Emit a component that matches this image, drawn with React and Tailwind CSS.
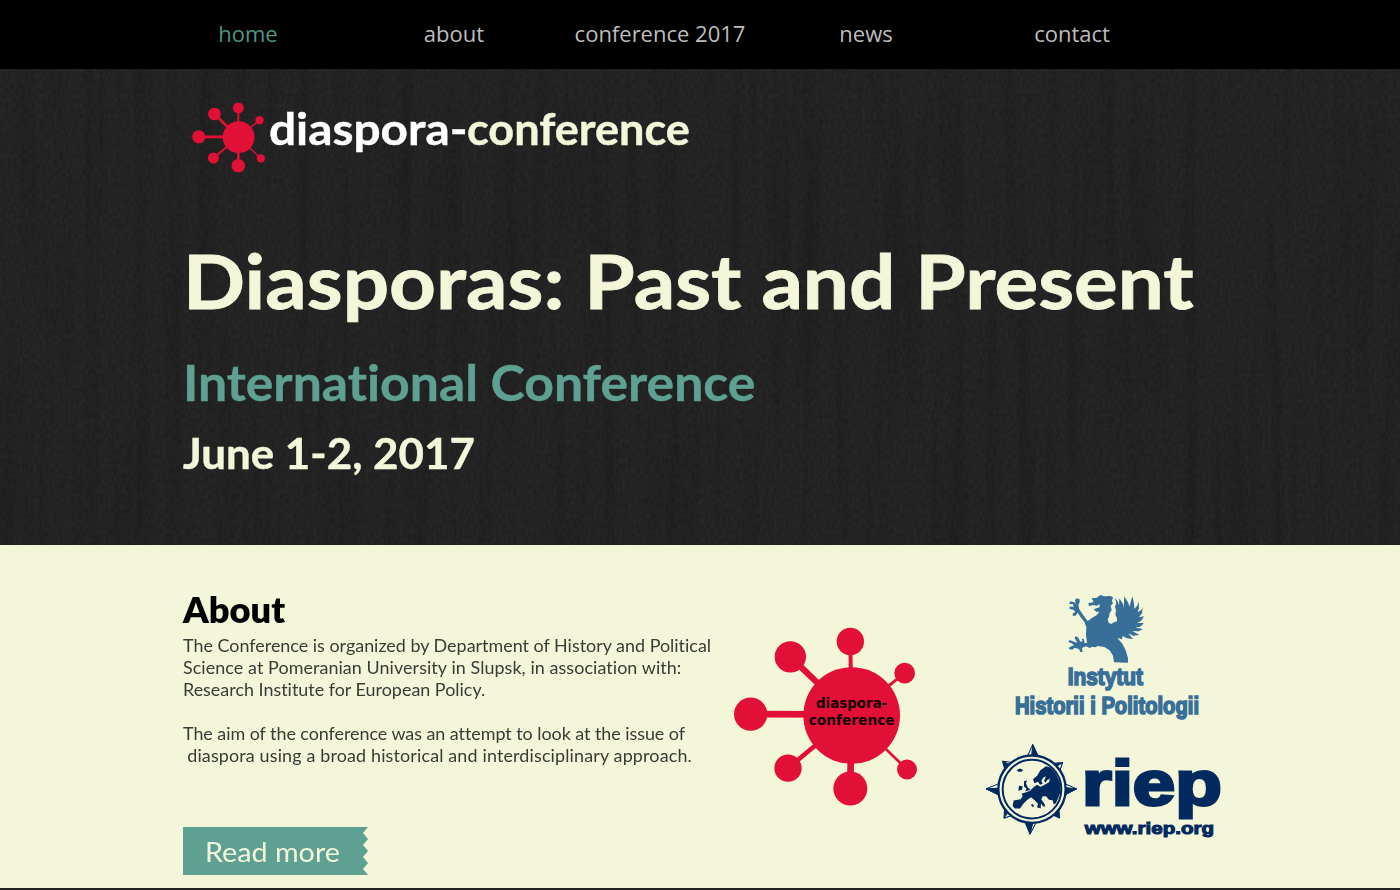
const NODES = [
  { x: 211, y: 139, r: 47, w: 19 },
  { x: 391, y: 93, r: 41, w: 12 },
  { x: 554, y: 188, r: 31, w: 9 },
  { x: 92, y: 311, r: 50, w: 20 },
  { x: 204, y: 473, r: 41, w: 14 },
  { x: 391, y: 534, r: 51, w: 20 },
  { x: 561, y: 477, r: 30, w: 8 },
];

function Molecule({ className }) {
  return (
    <svg viewBox="42 50 552 536" className={className} fill="#e20f36" stroke="#e20f36">
      {NODES.map((n) => (
        <g key={`${n.x}-${n.y}`}>
          <line x1={n.x} y1={n.y} x2="394" y2={n.y === 311 ? 312 : 315} strokeWidth={n.w} />
          <circle cx={n.x} cy={n.y} r={n.r} stroke="none" />
        </g>
      ))}
      <circle cx="395" cy="315" r="145" stroke="none" />
      <g fill="#120006" stroke="none" fontFamily="DejaVu Sans, sans-serif" fontWeight="700" fontSize="43">
        <text x="288" y="292" textLength="214" lengthAdjust="spacingAndGlyphs">diaspora-</text>
        <text x="266" y="342" textLength="258" lengthAdjust="spacingAndGlyphs">conference</text>
      </g>
    </svg>
  );
}

function SmallMolecule() {
  return (
    <svg viewBox="66 66 222 214" className="h-[71px] w-[74px] shrink-0" fill="#e20f36" stroke="#e20f36">
      <path d="M205 172 133 102" strokeWidth="8" />
      <path d="M205 172V84" strokeWidth="6" />
      <path d="M205 172 269 121" strokeWidth="5" />
      <path d="M205 171H86" strokeWidth="8" />
      <path d="M205 172 130 235" strokeWidth="6" />
      <path d="M205 172V258" strokeWidth="8" />
      <path d="M205 172 273 236" strokeWidth="4" />
      <g stroke="none">
        <circle cx="206" cy="172" r="48" />
        <circle cx="133" cy="102" r="19" />
        <circle cx="205" cy="84" r="16.500" />
        <circle cx="269" cy="121" r="12.500" />
        <circle cx="86" cy="171" r="20" />
        <circle cx="130" cy="235" r="16.500" />
        <circle cx="205" cy="258" r="20.500" />
        <circle cx="273" cy="236" r="12.500" />
      </g>
    </svg>
  );
}

function InstituteLogo() {
  return (
    <svg viewBox="85 30 600 408" className="h-[136px] w-[200px]" fill="#376f98">
      <path d="M326 69 342 67 336 54 350 54 362 45 374 49 392 48 400 52 397 63 400 70 393 78 396 90 390 99 388 110 384 118 387 128 394 132 403 127 412 124 412 115 407 104 409 91 406 80 410 68 405 53 415 65 418 77 419 55 430 72 432 83 434 49 446 69 449 80 454 62 458 49 463 70 464 86 473 77 477 63 478 84 474 97 485 90 489 80 487 100 478 112 493 109 486 121 473 129 492 129 484 139 467 143 490 147 477 154 458 153 479 165 461 167 446 160 460 178 442 175 429 168 427 178 413 174 428 191 438 211 445 235 445 248 403 247 400 227 390 211 374 201 354 198 347 202 338 200 330 204 319 199 307 204 309 216 302 216 298 207 285 203 278 209 267 207 270 201 283 196 276 190 266 186 270 180 285 186 293 188 285 174 287 169 295 172 302 185 309 184 306 177 312 176 315 190 322 188 319 164 320 142 314 125 304 113 294 98 288 107 279 107 279 101 287 95 281 89 270 87 269 80 282 80 280 73 268 71 272 64 284 67 288 72 286 61 290 55 300 58 300 67 296 75 299 88 310 104 324 123 338 113 352 105 359 95 350 95 342 88 359 82 361 73 351 77 339 75 328 79Z" />
      <g fontFamily="Liberation Sans, sans-serif" fontWeight="700" fontSize="72" stroke="#376f98" strokeWidth="5">
        <text x="264" y="314" textLength="226" lengthAdjust="spacingAndGlyphs">Instytut</text>
        <text x="106" y="401" textLength="552" lengthAdjust="spacingAndGlyphs">Historii i Politologii</text>
      </g>
    </svg>
  );
}

function RiepLogo() {
  return (
    <svg viewBox="30 25 714 290" className="h-[97px] w-[238px]" fill="#022a5f">
      <g stroke="#022a5f" strokeWidth="3" strokeLinejoin="round">
        <path d="M173 29 157 65H190Z" fill="#f4f6da" />
        <path d="M173 29 170 65H190Z" />
        <path d="M305 162 268 146V181Z" fill="#f4f6da" />
        <path d="M305 162 268 158V181Z" />
        <path d="M165 298 149 260H184Z" />
        <path d="M165 298 174 262H184Z" fill="#f4f6da" />
        <path d="M33 162 73 146V181Z" fill="#f4f6da" />
        <path d="M33 162 73 160V181Z" />
        <path d="M83 79 113 83 91 108Z" fill="#f4f6da" />
        <path d="M83 79 107 91 91 108Z" />
        <path d="M263 83 230 86 253 111Z" />
        <path d="M263 83 241 97 253 111Z" fill="#f4f6da" />
        <path d="M87 250 89 214 115 240Z" />
        <path d="M87 250 103 226 115 240Z" fill="#f4f6da" />
        <path d="M254 250 228 238 251 214Z" />
      </g>
      <circle cx="171" cy="163" r="101" fill="#f4f6da" stroke="#022a5f" strokeWidth="7" />
      <circle cx="171" cy="163" r="88" fill="#f4f6da" stroke="#022a5f" strokeWidth="6" />
      <path d="M125 106 134 101 144 105 140 111 130 111Z" />
      <path d="M213 94 226 98 243 117 255 145 257 171 249 191 242 206 236 208 233 196 222 195 213 184 203 184 199 194 208 207 211 215 204 214 198 206 197 221 186 217 189 207 179 196 168 187 157 195 145 207 135 221 119 221 113 213 116 197 137 193 143 184 140 176 154 172 166 167 174 159 186 150 197 156 209 150 222 142 225 131 216 136 212 143 207 139 213 124 205 128 199 138 203 147 195 150 189 141 178 145 174 133 187 122 196 106Z" />
      <path d="M147 139 156 137 153 147 159 159 167 165 151 169 154 160 147 156Z" />
      <path d="M132 153 143 154 141 165 130 168Z" />
      <path d="M171 207 177 212 174 217 168 211Z" />
      <g fontFamily="Liberation Sans, sans-serif" fontWeight="700" stroke="#022a5f">
        <text x="321" y="211" fontSize="187" strokeWidth="9" textLength="419" lengthAdjust="spacingAndGlyphs">riep</text>
        <text x="329" y="298" fontSize="47" strokeWidth="3" textLength="388" lengthAdjust="spacingAndGlyphs">www.riep.org</text>
      </g>
    </svg>
  );
}

function WoodTexture() {
  return (
    <svg className="absolute inset-0 h-full w-full" aria-hidden="true">
      <filter id="grain" x="0" y="0" width="100%" height="100%">
        <feTurbulence type="fractalNoise" baseFrequency="0.35 0.2" numOctaves="2" seed="4" />
        <feColorMatrix values="0 0 0 0 0  0 0 0 0 0  0 0 0 0 0  0.9 0 0 0 -0.25" />
      </filter>
      <filter id="planks" x="0" y="0" width="100%" height="100%">
        <feTurbulence type="fractalNoise" baseFrequency="0.06 0.003" numOctaves="3" seed="9" />
        <feColorMatrix values="0 0 0 0 0  0 0 0 0 0  0 0 0 0 0  2 0 0 0 -0.95" />
      </filter>
      <rect width="100%" height="100%" filter="url(#grain)" opacity="0.4" />
      <rect width="100%" height="100%" filter="url(#planks)" opacity="0.16" />
    </svg>
  );
}

const LINKS = [
  { label: "home", active: true },
  { label: "about" },
  { label: "conference 2017" },
  { label: "news" },
  { label: "contact" },
];

export default function App() {
  return (
    <div className="flex h-[890px] w-[1400px] flex-col overflow-hidden bg-[#f4f6da] font-['Lato',sans-serif] [font-variant-ligatures:none]">
      <nav className="grid h-[69px] shrink-0 grid-cols-[206px_206px_206px_206px_206px] bg-black pl-[145px] font-['Open_Sans',sans-serif] text-[22px] leading-[67px]">
        {LINKS.map((l) => (
          <a key={l.label} href="#" className={l.active ? "text-center whitespace-nowrap text-[#4f9583]" : "text-center whitespace-nowrap text-[#bdbdbd]"}>
            {l.label}
          </a>
        ))}
      </nav>

      <header className="relative h-[476px] shrink-0 bg-[#272727]">
        <WoodTexture />
        <div className="relative flex flex-col pl-[183px] whitespace-nowrap">
          <div className="flex pt-[33px] pl-[9px]">
            <SmallMolecule />
            <div className="ml-[3px] flex text-[44px] leading-[53px] font-bold">
              <span className="w-[198px] origin-left scale-x-[1.085] text-white [-webkit-text-stroke:0.4px_white]">diaspora-</span>
              <span className="origin-left scale-x-[1.024] text-[#f4f6da] [-webkit-text-stroke:0.4px_#f4f6da]">conference</span>
            </div>
          </div>
          <h1 className="mt-[59px] w-fit origin-left scale-x-[1.09] text-[75px] leading-[96px] font-bold text-[#f4f6da] [-webkit-text-stroke:0.8px_#f4f6da]">Diasporas: Past and Present</h1>
          <h2 className="mt-[24px] w-fit origin-left scale-x-[1.034] text-[50px] leading-[61px] font-bold text-[#5ea091] [-webkit-text-stroke:0.4px_#5ea091]">International Conference</h2>
          <p className="mt-[14px] w-fit origin-left scale-x-[1.045] text-[42px] leading-[52px] font-bold text-[#f4f6da] [-webkit-text-stroke:0.4px_#f4f6da]">June 1-2, 2017</p>
        </div>
      </header>

      <main className="flex h-[343px] shrink-0 pl-[183px]">
        <section className="w-[551px] whitespace-nowrap">
          <h2 className="w-fit origin-left scale-x-[1.035] pt-[42px] text-[35px] leading-[44px] font-extrabold text-black">About</h2>
          <div className="mt-[4px] w-fit origin-left scale-x-[1.054] text-[17px] leading-[22px] text-[#3b3b36]">
            <p>The Conference is organized by Department of History and Political</p>
            <p className="tracking-[0.07px]">Science at Pomeranian University in Slupsk, in association with:</p>
            <p>Research Institute for European Policy.</p>
            <p className="mt-[22px] tracking-[-0.04px]">The aim of the conference was an attempt to look at the issue of</p>
            <p className="pl-1 tracking-[0.14px]">diaspora using a broad historical and interdisciplinary approach.</p>
          </div>
          <a href="#" className="mt-[60px] block h-[48px] w-[186px] bg-[#5ea091] pl-[22px] text-[26px] leading-[50px] text-[#f4f6da] [clip-path:polygon(0_0,185px_0,180px_6px,185px_12px,180px_18px,185px_24px,180px_30px,185px_36px,180px_42px,185px_48px,0_48px)]">
            <span className="inline-block origin-left scale-x-[1.105]">Read more</span>
          </a>
        </section>
        <Molecule className="mt-[82px] h-[179px] w-[184px] shrink-0" />
        <section className="ml-[67px] flex flex-col">
          <div className="pt-[45px] pl-[23px]">
            <InstituteLogo />
          </div>
          <div className="mt-[17px]">
            <RiepLogo />
          </div>
        </section>
      </main>
      <div className="h-[2px] shrink-0 bg-[#222]" />
    </div>
  );
}
